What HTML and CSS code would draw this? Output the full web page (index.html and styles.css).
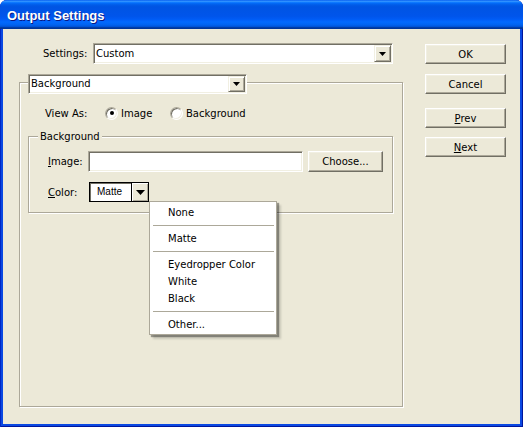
FILE: index.html
```html
<!DOCTYPE html>
<html>
<head>
<meta charset="utf-8">
<title>Output Settings</title>
<link rel="stylesheet" href="styles.css">
</head>
<body>
<div class="window">
  <div class="titlebar"><span class="title">Output Settings</span></div>
  <div class="client">
    <div class="main">
      <div class="settings-row">
        <span class="label settings-label">Settings:</span>
        <div class="combo settings-combo">
          <span class="combo-text">Custom</span>
          <span class="drop"><svg width="7" height="4" viewBox="0 0 7 4"><path d="M0 0H7L3.5 4Z" fill="#000"/></svg></span>
        </div>
      </div>
      <div class="group">
        <div class="combo legend-combo">
          <span class="combo-text">Background</span>
          <span class="drop"><svg width="7" height="4" viewBox="0 0 7 4"><path d="M0 0H7L3.5 4Z" fill="#000"/></svg></span>
        </div>
        <div class="viewas-row">
          <span class="label viewas-label">View As:</span>
          <span class="radio checked"></span><span class="opt-text opt-image">Image</span>
          <span class="radio"></span><span class="opt-text">Background</span>
        </div>
        <div class="subgroup">
          <span class="sublegend">Background</span>
          <div class="img-row">
            <span class="label img-label"><u>I</u>mage:</span>
            <div class="input"></div>
            <div class="btn choose">Choose...</div>
          </div>
          <div class="color-row">
            <span class="label color-label"><u>C</u>olor:</span>
            <div class="colorbox">Matte</div>
            <div class="colordrop"><svg width="9" height="5" viewBox="0 0 9 5"><path d="M0 0H9L4.5 5Z" fill="#000"/></svg></div>
          </div>
        </div>
      </div>
    </div>
    <div class="buttons">
      <div class="btn side">OK</div>
      <div class="btn side cancel">Cancel</div>
      <div class="btn side prev"><span><u>P</u>rev</span></div>
      <div class="btn side next"><span><u>N</u>ext</span></div>
    </div>
    <div class="menu">
      <div class="mi">None</div>
      <div class="sep"></div>
      <div class="mi">Matte</div>
      <div class="sep"></div>
      <div class="mi">Eyedropper Color</div>
      <div class="mi">White</div>
      <div class="mi">Black</div>
      <div class="sep"></div>
      <div class="mi">Other...</div>
    </div>
  </div>
</div>
</body>
</html>
```
FILE: styles.css
```css
* { box-sizing: border-box; }
html, body { margin: 0; padding: 0; }
body {
  width: 523px;
  height: 427px;
  background: #ffffff;
  font-family: "DejaVu Sans", Tahoma, sans-serif;
  font-size: 10px;
  color: #000;
  overflow: hidden;
}
.window {
  width: 523px;
  height: 427px;
  display: flex;
  flex-direction: column;
  background: #0a48e2;
  border-radius: 7px 7px 0 0;
  overflow: hidden;
  box-shadow: inset 1px 0 0 #0027c4, inset -1px 0 0 #00169c, inset 0 -1px 0 #00169c;
}
.titlebar {
  height: 29px;
  flex: none;
  display: flex;
  align-items: center;
  padding: 2px 0 0 7px;
  background: linear-gradient(to bottom,
    #0058ee 0%, #3593ff 4%, #288eff 6%, #127dff 8%, #036ffc 10%,
    #0262ee 14%, #0057e5 20%, #0054e3 24%, #0055eb 56%, #005bf5 66%,
    #026afe 76%, #0062ef 86%, #0052d6 92%, #0040ab 94%, #003092 100%);
}
.title {
  font: bold 13px "Liberation Sans", Arial, sans-serif;
  color: #fff;
  text-shadow: 1px 1px 0 #0a1883;
}
.client {
  flex: 1;
  margin: 0 3px 3px 3px;
  background: #ece9d8;
  position: relative;
  display: flex;
}
.main {
  width: 422px;
  flex: none;
  padding: 14px 0 0 16px;
}
.label { white-space: nowrap; }
.settings-row {
  display: flex;
  align-items: center;
  height: 21px;
}
.settings-label { width: 50px; margin-left: 24px; }
.combo {
  display: flex;
  background: #fff;
  border: 1px solid;
  border-color: #aca899 #fff #fff #aca899;
  box-shadow: inset 1px 1px 0 #716f64, inset -1px -1px 0 #f1efe2;
  padding: 1px;
}
.settings-combo { width: 300px; height: 21px; }
.combo-text {
  flex: 1;
  padding-left: 1px;
  line-height: 17px;
  white-space: nowrap;
}
.legend-combo .combo-text { line-height: 16px; }
.drop {
  width: 17px;
  flex: none;
  background: #ece9d8;
  border: 1px solid;
  border-color: #f1efe2 #716f64 #716f64 #f1efe2;
  box-shadow: inset 1px 1px 0 #fff, inset -1px -1px 0 #aca899;
  display: flex;
  align-items: center;
  justify-content: center;
}
.drop svg, .colordrop svg { display: block; }
.group {
  margin-top: 18px;
  width: 384px;
  height: 325px;
  border: 1px solid #aca899;
  box-shadow: inset 1px 1px 0 #fff, 1px 1px 0 #fff;
}
.legend-combo {
  margin: -9px 0 0 8px;
  width: 219px;
  height: 20px;
}
.viewas-row {
  display: flex;
  align-items: center;
  height: 16px;
  margin-top: 11px;
  padding-left: 25px;
}
.viewas-label { width: 60px; }
.radio {
  width: 13px;
  height: 13px;
  flex: none;
  border-radius: 50%;
  background: #fff;
  border: 1px solid;
  border-color: #aca899 #fff #fff #aca899;
  box-shadow: inset 1px 1px 0 #716f64, inset -1px -1px 0 #f1efe2;
  display: flex;
  align-items: center;
  justify-content: center;
  margin-right: 3px;
}
.radio.checked::after {
  content: "";
  width: 4px;
  height: 4px;
  border-radius: 50%;
  background: #000;
}
.opt-image { width: 49px; }
.subgroup {
  margin: 15px 0 0 8px;
  width: 365px;
  height: 77px;
  border: 1px solid #aca899;
  box-shadow: inset 1px 1px 0 #fff, 1px 1px 0 #fff;
}
.sublegend {
  display: block;
  width: max-content;
  margin: -7px 0 0 9px;
  padding: 0 2px;
  line-height: 13px;
  background: #ece9d8;
}
.img-row {
  display: flex;
  align-items: center;
  margin-top: 8px;
  padding-left: 19px;
  height: 21px;
}
.img-label { width: 40px; }
.input {
  width: 215px;
  height: 21px;
  background: #fff;
  border: 1px solid;
  border-color: #aca899 #fff #fff #aca899;
  box-shadow: inset 1px 1px 0 #716f64, inset -1px -1px 0 #f1efe2;
}
.btn {
  display: flex;
  align-items: center;
  justify-content: center;
  background: #ece9d8;
  border: 1px solid;
  border-color: #fff #716f64 #716f64 #fff;
  box-shadow: inset -1px -1px 0 #aca899, inset 1px 1px 0 #f1efe2;
  white-space: nowrap;
}
.choose { margin-left: 5px; width: 75px; height: 21px; }
.color-row {
  display: flex;
  align-items: center;
  margin-top: 10px;
  padding-left: 19px;
  height: 20px;
}
.color-label { width: 41px; }
.colorbox {
  width: 42px;
  height: 20px;
  background: #fff;
  border: 1px solid #000;
  border-right: none;
  box-shadow: inset 1px 1px 0 #716f64;
  font: 10px "Liberation Sans", Arial, sans-serif;
  line-height: 18px;
  padding-left: 7px;
}
.colordrop {
  width: 18px;
  height: 20px;
  border: 1px solid #000;
  background: #ece9d8;
  box-shadow: inset 1px 1px 0 #fff, inset -1px -1px 0 #aca899;
  display: flex;
  align-items: center;
  justify-content: center;
}
.buttons {
  display: flex;
  flex-direction: column;
  padding-top: 15px;
}
.side { width: 81px; height: 20px; }
.cancel { margin-top: 10px; }
.prev { margin-top: 14px; }
.next { margin-top: 9px; }
.menu {
  position: absolute;
  left: 146px;
  top: 172px;
  width: 128px;
  background: #fff;
  border: 1px solid #aca899;
  box-shadow: 2px 2px 1px rgba(0, 0, 0, 0.35), 4px 4px 2px rgba(0, 0, 0, 0.15);
  padding: 2px 0 1px 0;
}
.mi {
  height: 17px;
  line-height: 17px;
  padding-left: 18px;
  white-space: nowrap;
}
.sep {
  height: 1px;
  background: #aca899;
  margin: 4px 2px 4px 3px;
}
```
